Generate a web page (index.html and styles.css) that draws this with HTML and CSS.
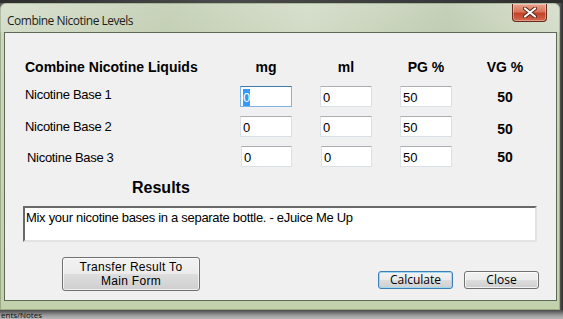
FILE: index.html
```html
<!DOCTYPE html>
<html lang="en">
<head>
    <meta charset="UTF-8">
    <meta name="viewport" content="width=device-width, initial-scale=1.0">
    <title>Combine Nicotine Levels</title>
    <link rel="stylesheet" href="styles.css">
</head>
<body>
    <div class="top-strip"></div>
    <div class="desk">
        <div class="window">
            <div class="titlebar">
                <span class="title">Combine Nicotine Levels</span>
                <button class="close-x" aria-label="Close">
                    <svg width="14" height="11" viewBox="0 0 14 11">
                        <path d="M2 1.5 L12 9.5 M12 1.5 L2 9.5" stroke="#5a2418" stroke-width="4" stroke-linecap="round"/>
                        <path d="M2 1.5 L12 9.5 M12 1.5 L2 9.5" stroke="#ffffff" stroke-width="2.2" stroke-linecap="round"/>
                    </svg>
                </button>
            </div>

            <div class="client">
                <div class="grid">
                    <div class="head head-left">Combine Nicotine Liquids</div>
                    <div class="head">mg</div>
                    <div class="head">ml</div>
                    <div class="head">PG %</div>
                    <div class="head">VG %</div>

                    <div class="label label-up">Nicotine Base 1</div>
                    <div class="tb tb-focus"><span class="sel">0</span></div>
                    <div class="tb">0</div>
                    <div class="tb">50</div>
                    <div class="vg">50</div>

                    <div class="label">Nicotine Base 2</div>
                    <div class="tb">0</div>
                    <div class="tb">0</div>
                    <div class="tb">50</div>
                    <div class="vg vg-down">50</div>

                    <div class="label label-in">Nicotine Base 3</div>
                    <div class="tb tb-in">0</div>
                    <div class="tb tb-in">0</div>
                    <div class="tb">50</div>
                    <div class="vg">50</div>
                </div>

                <div class="results-title">Results</div>
                <div class="results-box">Mix your nicotine bases in a separate bottle. - eJuice Me Up</div>

                <div class="actions">
                    <button class="btn btn-transfer"><span class="line">Transfer Result To</span><span class="line">Main Form</span></button>
                    <div class="right-btns">
                        <button class="btn btn-default">Calculate</button>
                        <button class="btn">Close</button>
                    </div>
                </div>
            </div>
        </div>
        <div class="shadow-right"></div>
    </div>
    <div class="bottom-strip">ents/Notes</div>
</body>
</html>
```

FILE: styles.css
```css
body {
    margin: 0;
    padding: 0;
    width: 563px;
    height: 319px;
    overflow: hidden;
    background: #3b3b3b;
    font-family: "Liberation Sans", Arial, sans-serif;
}
.top-strip {
    height: 3px;
    background: linear-gradient(90deg, #2e2e2e, #4a4a4a 40%, #2e2e2e);
}
.desk {
    display: flex;
    height: 307px;
}
.window {
    width: 560px;
    height: 307px;
    box-sizing: border-box;
    display: flex;
    flex-direction: column;
    background: linear-gradient(180deg, #d3dcc8 0%, #cbd6bd 12%, #c3d2ad 100%);
    border-radius: 6px 6px 0 0;
    box-shadow: inset 0 0 0 1px rgba(80,100,60,0.35);
}
.titlebar {
    height: 29px;
    display: flex;
    justify-content: space-between;
    align-items: flex-start;
    background: linear-gradient(90deg, rgba(255,255,255,0.15), rgba(170,185,150,0.25) 30%, rgba(255,255,255,0.1) 55%, rgba(160,175,145,0.25) 80%, rgba(255,255,255,0.15));
}
.title {
    font-family: "Open Sans", "Noto Sans", sans-serif;
    font-size: 12px;
    color: #1e1e1e;
    margin: 9px 0 0 7px;
    letter-spacing: -0.5px;
}
.close-x {
    width: 35px;
    height: 18px;
    margin: 1px 13px 0 0;
    padding: 0;
    border: 1px solid #6b2a1d;
    border-top: none;
    border-radius: 0 0 4px 4px;
    background: linear-gradient(180deg, #eba38d 0%, #d8765d 45%, #c2432a 55%, #d2684c 100%);
    display: flex;
    align-items: center;
    justify-content: center;
    box-shadow: inset 0 0 0 1px rgba(255,255,255,0.35);
}
.client {
    height: 269px;
    margin: 0 3px 0 4px;
    box-sizing: border-box;
    border: 1px solid #5e6a55;
    background: #f0f0f0;
    padding: 24px 0 0 20px;
}
.grid {
    display: grid;
    grid-template-columns: 187px 52px 52px 52px 50px;
    grid-template-rows: 20px 21px 21px 21px;
    column-gap: 28px;
    row-gap: 9px;
    align-items: center;
}
.head {
    font-weight: bold;
    font-size: 14px;
    color: #000;
    text-align: center;
}
.head-left {
    text-align: left;
}
.label {
    font-size: 13px;
    letter-spacing: -0.3px;
    color: #000;
}
.label-up {
    padding-bottom: 5px;
}
.label-in {
    padding-left: 2px;
    padding-top: 1px;
}
.tb {
    height: 21px;
    box-sizing: border-box;
    background: #fff;
    border: 1px solid #dbdfe6;
    border-top-color: #abadb3;
    font-size: 13px;
    line-height: 19px;
    padding: 1px 0 0 2px;
    color: #000;
}
.tb-in {
    margin-left: 1px;
}
.tb-focus {
    border-color: #7eb4ea;
    border-top-color: #3d7bad;
}
.sel {
    background: #3399ff;
    color: #fff;
    padding: 1px 0;
}
.vg {
    font-weight: bold;
    font-size: 14px;
    text-align: center;
}
.vg-down {
    padding-top: 5px;
}
.results-title {
    font-weight: bold;
    font-size: 16px;
    margin: 12px 0 0 107px;
    line-height: 18px;
}
.results-box {
    width: 514px;
    height: 36px;
    box-sizing: border-box;
    margin: 9px 0 0 -2px;
    background: #fff;
    border: 2px solid #e3e3e3;
    border-top-color: #696969;
    border-left-color: #696969;
    font-size: 13px;
    letter-spacing: -0.3px;
    line-height: 15px;
    padding: 2px 0 0 1px;
}
.actions {
    display: flex;
    margin-top: 15px;
}
.btn {
    font-family: "Open Sans", "Noto Sans", sans-serif;
    font-size: 12px;
    color: #000;
    border: 1px solid #707070;
    border-radius: 3px;
    background: linear-gradient(180deg, #f2f2f2 0%, #ebebeb 50%, #dddddd 50%, #cfcfcf 100%);
    box-shadow: inset 0 0 0 1px rgba(255,255,255,0.7);
    padding: 0;
    line-height: 14px;
}
.btn-transfer {
    width: 138px;
    height: 34px;
    margin-left: 37px;
    display: flex;
    flex-direction: column;
    align-items: center;
    justify-content: center;
    font-family: "Liberation Sans", Arial, sans-serif;
    letter-spacing: 0.3px;
}
.btn-transfer .line {
    display: block;
    height: 14px;
    line-height: 14px;
}
.right-btns {
    display: flex;
    gap: 11px;
    margin: 14px 0 0 178px;
}
.right-btns .btn {
    width: 75px;
    height: 18px;
}
.btn-default {
    border-color: #3c7fb1;
    box-shadow: inset 0 0 0 1px #9fd8f3;
}
.shadow-right {
    width: 3px;
    background: linear-gradient(90deg, #555, #2e2e2e);
}
.bottom-strip {
    height: 9px;
    background: linear-gradient(180deg, #4a4a4a 0%, #9a9a9a 60%, #b8b8b8 100%);
    font-family: "Open Sans", "Noto Sans", sans-serif;
    font-size: 8px;
    line-height: 9px;
    color: #111;
    overflow: hidden;
    padding-left: 1px;
}
```
